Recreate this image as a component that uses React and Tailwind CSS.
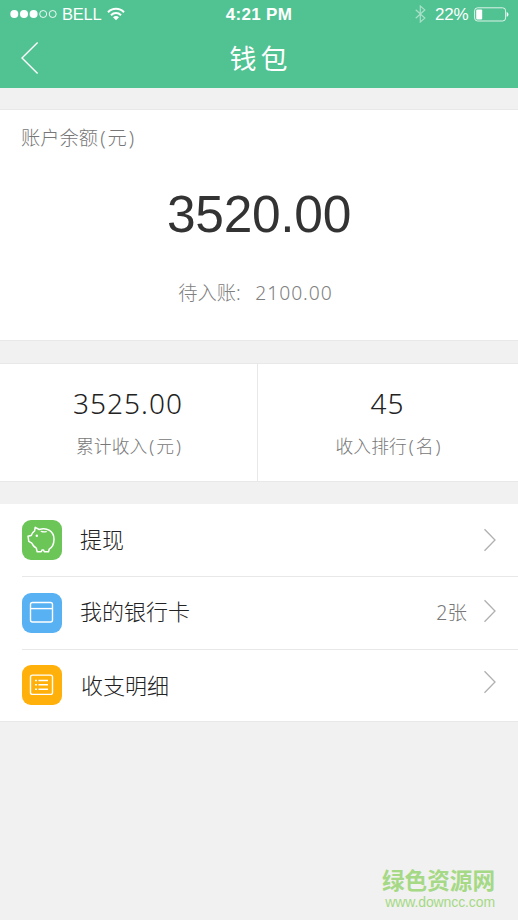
import React from 'react';

function StatusBar() {
  return (
    <div className="flex h-7 items-center justify-between pl-2.5 pr-[9px] font-['Liberation_Sans',sans-serif] text-[17px] leading-7 text-white">
      <div className="flex w-[180px] items-center">
        <svg width="47" height="10" viewBox="0 0 47 10" fill="#fff">
          <circle cx="4.3" cy="5" r="4" />
          <circle cx="14" cy="5" r="4" />
          <circle cx="23.6" cy="5" r="4" />
          <circle cx="33.2" cy="5" r="3.5" fill="none" stroke="#fff" strokeWidth="0.9" />
          <circle cx="42.7" cy="5" r="3.5" fill="none" stroke="#fff" strokeWidth="0.9" />
        </svg>
        <span className="ml-[5px] w-10 text-[16.5px] tracking-[-0.2px]">BELL</span>
        <svg className="ml-[5px]" width="18" height="14" viewBox="0 0 18 14" fill="none" stroke="#fff" strokeWidth="2">
          <path d="M1 5.2C5.4 .6 12.6 .6 17 5.2" />
          <path d="M4 8.2C6.8 5.3 11.2 5.3 14 8.2" />
          <path d="M9 13.2L6 10.2C7.7 8.6 10.3 8.6 12 10.2Z" fill="#fff" stroke="none" />
        </svg>
      </div>
      <span className="pr-px pt-[2px] text-[17px] font-bold tracking-[0.3px]">4:21 PM</span>
      <div className="flex w-[180px] items-center justify-end">
        <svg className="opacity-50" width="11" height="18" viewBox="0 0 11 18" fill="none" stroke="#fff" strokeWidth="1.2">
          <path d="M.7 4.7L9.8 13.1L5.3 17V1L9.8 4.9L.7 13.3" />
        </svg>
        <span className="ml-[9px] w-[34px] pt-px text-[17px] tracking-[-0.2px]">22%</span>
        <svg className="ml-[5px]" width="35" height="15" viewBox="0 0 35 15">
          <rect x="0.6" y="0.8" width="31" height="13.2" rx="3" fill="none" stroke="#fff" strokeOpacity="0.8" />
          <rect x="2.2" y="2.4" width="6" height="10" rx="1" fill="#fff" />
          <path d="M32.7 5c2.3 .8 2.3 4 0 4.8z" fill="#fff" />
        </svg>
      </div>
    </div>
  );
}

function PigIcon() {
  return (
    <svg width="40" height="40" viewBox="0 0 40 40" fill="none" stroke="#fff" strokeWidth="1.5" strokeLinejoin="round" strokeLinecap="round">
      <path d="M13.2 7.3L17.2 9.5C24.8 6.8 32 11.4 32 19.2C32 24.1 30.4 27.1 27.2 29.2L26.5 31.7H22.3L21.6 30.1H19.9L19.2 31.7H15.2L14.3 28.2C12.2 27 10.7 25.3 9.8 23.1L6.8 21.4L6 16.2L9.2 15.4C10 13.4 11.2 11.9 12.6 10.9Z" />
      <path d="M19.2 11.4C20.9 12 22.8 12 24.3 11.7" strokeWidth="1.2" />
      <circle cx="14.8" cy="15.8" r="1.2" fill="#fff" stroke="none" />
    </svg>
  );
}

function CardIcon() {
  return (
    <svg width="40" height="40" viewBox="0 0 40 40" fill="none" stroke="#fff" strokeWidth="1.4">
      <rect x="8.5" y="9.5" width="22" height="19.5" rx="2" />
      <path d="M8.5 15.6h22" />
    </svg>
  );
}

function ListIcon() {
  return (
    <svg width="40" height="40" viewBox="0 0 40 40" fill="none" stroke="#fff" strokeWidth="1.4">
      <rect x="8.5" y="10.1" width="22" height="19.3" rx="2" />
      <path d="M13 15.5h2M13 19.8h2M13 24.3h2M16.5 15.5h9.5M16.5 19.8h9.5M16.5 24.3h9.5" />
    </svg>
  );
}

function Chevron() {
  return (
    <svg width="14" height="24" viewBox="0 0 14 24" fill="none" stroke="#b0b0b0" strokeWidth="1.3">
      <path d="M1.5 1.2L12 12L1.5 22.8" />
    </svg>
  );
}

export default function App() {
  return (
    <div className="flex h-[920px] w-[518px] flex-col overflow-hidden bg-[#f1f1f1] font-['Noto_Sans','Noto_Sans_CJK_SC',sans-serif] font-light">
      <header className="h-[88px] shrink-0 bg-[#51c292]">
        <StatusBar />
        <div className="flex h-[60px] items-center justify-between px-5">
          <svg width="20" height="34" viewBox="0 0 20 34" fill="none" stroke="#fff" strokeWidth="1.4">
            <path d="M17.6 1.5L2 17L17.6 32.5" />
          </svg>
          <h1 className="pl-[3px] font-['Noto_Sans_CJK_SC',sans-serif] text-[27px] font-normal leading-[60px] tracking-[4px] text-white">钱包</h1>
          <div className="w-5" />
        </div>
      </header>

      <section className="mt-[21px] h-[232px] shrink-0 border-y border-[#e8e8e8] bg-white">
        <div className="h-[54px] pl-[21px] text-[19.3px] leading-[56px] text-[#777]">
          账户余额<span className="ml-[2px] mr-[2px]">(</span>元<span className="ml-[2px]">)</span>
        </div>
        <div className="text-center font-['Liberation_Sans',sans-serif] text-[51.5px] font-normal leading-[100px] tracking-[-0.3px] text-[#333]">3520.00</div>
        <div className="flex justify-center pr-[7px] text-[19.3px] leading-[58px] text-[#808080]">
          <span className="w-[77px]">待入账:</span>
          <span className="tracking-[0.95px]">2100.00</span>
        </div>
      </section>

      <section className="mt-[22px] flex h-[119px] shrink-0 border-y border-[#e8e8e8] bg-white text-center">
        <div className="w-[258px] border-r border-[#e8e8e8] pt-[19px]">
          <div className="pr-px text-[28px] leading-[40px] tracking-[1px] text-[#222]">3525.00</div>
          <div className="text-[17.8px] leading-[46px] text-[#777]">
            累计收入<span className="ml-[2px] mr-[2px]">(</span>元<span className="ml-[2px]">)</span>
          </div>
        </div>
        <div className="flex-1 pt-[19px]">
          <div className="pr-px text-[28px] leading-[40px] tracking-[1px] text-[#222]">45</div>
          <div className="text-[17.8px] leading-[46px] text-[#777]">
            收入排行<span className="ml-[2px] mr-[2px]">(</span>名<span className="ml-[2px]">)</span>
          </div>
        </div>
      </section>

      <section className="mt-[22px] h-[218px] shrink-0 border-b border-[#e8e8e8] bg-white pl-[22px] text-[22px] text-[#222]">
        <div className="flex h-[73px] items-center border-b border-[#e8e8e8] pr-[21px]">
          <div className="h-10 w-10 rounded-[9px] bg-[#6bc557]"><PigIcon /></div>
          <span className="mb-[2px] ml-[18px] flex-1">提现</span>
          <Chevron />
        </div>
        <div className="flex h-[73px] items-center border-b border-[#e8e8e8] pr-[21px]">
          <div className="h-10 w-10 rounded-[9px] bg-[#57b1f3]"><CardIcon /></div>
          <span className="mb-1 ml-[18px] flex-1">我的银行卡</span>
          <span className="mb-px mr-4 text-[19.5px] text-[#777]">2张</span>
          <div className="mb-[5px]"><Chevron /></div>
        </div>
        <div className="flex h-[71px] items-center pr-[21px]">
          <div className="mb-[2px] h-10 w-10 rounded-[9px] bg-[#ffb00a]"><ListIcon /></div>
          <span className="ml-[19px] flex-1">收支明细</span>
          <div className="mb-[7px]"><Chevron /></div>
        </div>
      </section>

      <footer className="mt-auto pb-2.5 pr-[23px] text-right text-[#a5d985]">
        <div className="font-['Noto_Sans_CJK_SC',sans-serif] text-[22.6px] font-bold leading-[26px]">绿色资源网</div>
        <div className="pt-px font-['Liberation_Sans',sans-serif] text-[14px] font-normal leading-4 tracking-[-0.1px]">www.downcc.com</div>
      </footer>
    </div>
  );
}
